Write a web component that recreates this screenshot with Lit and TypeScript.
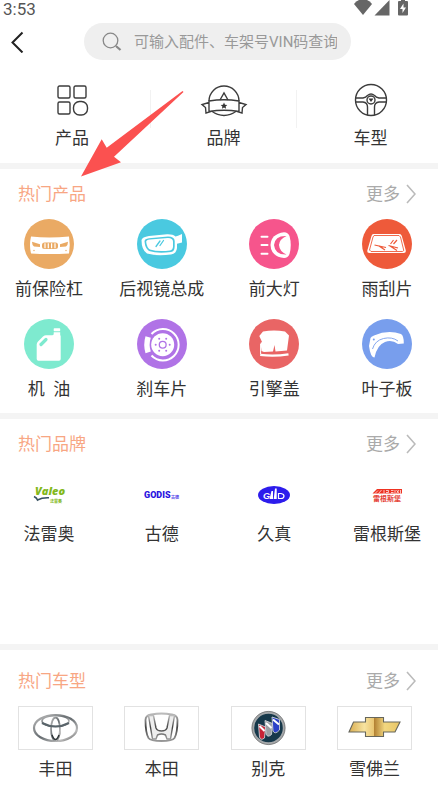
import { LitElement, html, css, svg } from "lit";
import { customElement } from "lit/decorators.js";

const white = "#fff";

const products = [
  {
    name: "前保险杠",
    color: "#eaaa64",
    art: svg`
      <path fill="#fff" d="M7 17.5Q25 19.5 45 17.5Q46.500 26 45 34.500Q25 35.500 7 34.500Q5 26 7 17.500Z"/>
      <rect x="18" y="23.500" width="16" height="6.600" rx="2.500" fill="#eaaa64"/>
      <path stroke="#fff" stroke-width="1.200" d="M21 24.300V29.300M24.300 24.300V29.300M27.600 24.300V29.300M31 24.300V29.300"/>
      <path fill="#eaaa64" d="M8 22.800L16 25.200V28L10 27.600Q8 26 8 22.800ZM44 22.800L36 25.200V28L42 27.600Q44 26 44 22.800Z"/>
      <circle cx="10" cy="31.500" r="0.700" fill="#eaaa64"/><circle cx="42" cy="31.500" r="0.700" fill="#eaaa64"/>`,
  },
  {
    name: "后视镜总成",
    color: "#4ac9e0",
    art: svg`
      <path fill="#fff" d="M4.500 21Q5 18 12 17L30 15.200Q36 15 38.500 17.500L41 16.800L45 15V23.500L40 24.800V29Q39.500 34.500 34 35.500Q20 37.500 10 34.500Q4.500 31 4.500 21Z"/>
      <path fill="#4ac9e0" d="M7.500 22.300Q7.500 20 12 19.300L31 17.500Q37.500 17.500 37.700 22V27.500Q37.500 32.500 34 33Q21 35 12 32Q8 29.500 7.500 22.300Z"/>
      <path fill="#fff" d="M9.200 22.800Q9.200 21 13 20.500L31 19Q35.800 19 36 22.500V27.500Q35.800 31 33 31.500Q21 33 13 30.500Q9.700 28.500 9.200 22.800Z"/>
      <path stroke="#4ac9e0" stroke-width="1.300" stroke-linecap="round" d="M19 27.500L23 22M23 26.500L26.500 21.500"/>`,
  },
  {
    name: "前大灯",
    color: "#f6558c",
    art: svg`
      <path stroke="#fff" stroke-width="2" stroke-linecap="round" d="M12.500 17.700H18.500M12.500 26H18.500M12.500 34.700H18.500"/>
      <path fill="#fff" d="M35 13.200Q22 15 21.500 26Q22 37.500 35 39Q39 39 40.500 35Q43 26 40.500 17Q39 13.200 35 13.200Z"/>
      <path fill="#f6558c" d="M37.500 17Q26 16.500 25 26Q26 36 37.500 35.500Q30.500 32.500 30 26Q30.500 20 37.500 17Z"/>`,
  },
  {
    name: "雨刮片",
    color: "#ee5a3a",
    art: svg`
      <path fill="#fff" d="M11.500 15H37.500Q39.200 15 39.800 17L43.800 31.500Q44 34 41.500 34H7.500Q5 34 5.300 31.500L9.500 17Q10 15 11.500 15Z"/>
      <path fill="none" stroke="#ee5a3a" stroke-width="0.900" d="M12 16.500H37L38.500 18L41.800 31.500L40.500 32.500H9L7.500 31L11 18Z"/>
      <path fill="none" stroke="#ee5a3a" stroke-width="1.200" d="M12.500 26L24 28.500M17 27L23 31M26.500 26.500L36 29M28 27L35 31.500M28.500 25L31.500 21M31.500 25L35 21"/>`,
  },
  {
    name: "机 \u00a0油",
    color: "#7eeacf",
    art: svg`
      <rect x="29.700" y="9.300" width="6.500" height="3" rx="0.700" fill="#fff"/>
      <path fill="#fff" d="M29.700 13.200H36.200V16L36.700 17V40Q36.700 41.700 35 41.700H14.500Q12.700 41.700 12.700 40V25.500Q12.700 24 14 22.500L19 17.500Q20.500 16.300 22 16.300H28.500L29.700 15.500Z"/>
      <path stroke="#7eeacf" stroke-width="3.200" stroke-linecap="round" d="M17 25.500L22 20.500"/>`,
  },
  {
    name: "刹车片",
    color: "#b073e6",
    art: svg`
      <circle cx="25.700" cy="25.700" r="11.500" fill="#fff"/>
      <path fill="none" stroke="#fff" stroke-width="2" d="M14.500 15A15.700 15.700 0 1 1 14.500 36.500"/>
      <path fill="#fff" d="M8.500 17.300L13.800 18.700Q11.500 25.500 13.800 32.500L8.500 34.300Q6 25.500 8.500 17.300Z"/>
      <circle cx="25.700" cy="25.700" r="3.400" fill="none" stroke="#b073e6" stroke-width="1.300"/>
      <g fill="#b073e6"><circle cx="32.700" cy="25.700" r="1"/><circle cx="18.700" cy="25.700" r="1"/><circle cx="22.200" cy="19.700" r="1"/><circle cx="29.200" cy="19.700" r="1"/><circle cx="22.200" cy="31.700" r="1"/><circle cx="29.200" cy="31.700" r="1"/></g>`,
  },
  {
    name: "引擎盖",
    color: "#e96565",
    art: svg`
      <path fill="#fff" d="M14 12.500Q25 10.500 36 12.500L40 16.500L39 24L38 31.500L26.500 32.500L25.500 26L24 32.500L15 33L12.500 32L11.500 24L13 23L10.300 17Z"/>
      <path fill="none" stroke="#fff" stroke-width="2.200" d="M11.200 35.800Q25 37.500 39.500 35.300"/>
      <path stroke="#fff" stroke-width="1" d="M11.600 25V35"/>`,
  },
  {
    name: "叶子板",
    color: "#789eed",
    art: svg`
      <path fill="#fff" d="M8.500 19Q9 17.500 12 16.500Q26 10.500 39 15Q42 17 41.800 24.500L36 25Q30 20.500 23 23Q15 26 12.500 38.500Q8.500 38.500 7 27Z"/>
      <path fill="none" stroke="#789eed" stroke-width="0.900" d="M10.500 30Q13 21.500 21.500 19.500Q30 17.500 36 22"/>
      <circle cx="11.800" cy="20.500" r="1" fill="#789eed"/>`,
  },
];

const brands = [
  {
    name: "法雷奥",
    art: svg`
      <text x="20" y="17" font-family="Open Sans, sans-serif" font-size="11" font-weight="800" font-style="italic" fill="#82b81c">Valeo</text>
      <path fill="none" stroke="#35505f" stroke-width="1.500" d="M19 18.500Q22 20 22.500 22Q27 19.500 34 19.800"/>
      <text x="35" y="25" font-family="Noto Sans CJK SC, sans-serif" font-size="4" font-weight="700" fill="#82b81c">法雷奥</text>`,
  },
  {
    name: "古德",
    art: svg`
      <text x="16" y="20" font-family="Roboto, sans-serif" font-size="9" font-weight="900" fill="#2a12e0">GODIS</text>
      <text x="43" y="21" font-family="Noto Sans CJK SC, sans-serif" font-size="4" font-weight="700" fill="#5544e8">古德</text>`,
  },
  {
    name: "久真",
    art: svg`
      <ellipse cx="34" cy="17" rx="16" ry="9" fill="#2d1cec"/>
      <text x="23" y="21" font-family="Liberation Sans, sans-serif" font-size="9" font-style="italic" font-weight="700" fill="#fff">G</text>
      <path fill="#fff" d="M29.500 21L31.500 13H33V21ZM33.700 21L35 10.500H36.700V21Z"/>
      <path fill="none" stroke="#fff" stroke-width="1.200" d="M38.500 15.500H41Q44 16 44 18Q44 20.500 41 20.500H38.500Z"/>`,
  },
  {
    name: "雷根斯堡",
    art: svg`
      <path fill="#ee3322" d="M19.500 15.500L24 11H49V15.500Z"/>
      <path fill="none" stroke="#fff" stroke-width="0.700" d="M22 15.500L25 12.500M25.500 15.500L28.500 12M31 12V15.500M33 12.500H35.500V14.500H33M38 12.500H40.500M38 14.500H40.500M42 12V15.500M43.500 12L46 15.500M46 12L43.500 15.500M47.500 12V15.500"/>
      <text x="20" y="23" font-family="Noto Sans CJK SC, sans-serif" font-size="7" font-weight="700" fill="#e5463a">雷根斯堡</text>`,
  },
];

const cars = [
  {
    name: "丰田",
    art: svg`
      <defs><linearGradient id="chrome" x1="0" y1="0" x2="1" y2="1"><stop offset="0" stop-color="#bbb"/><stop offset="0.500" stop-color="#666c70"/><stop offset="0.800" stop-color="#bbb"/><stop offset="1" stop-color="#444"/></linearGradient></defs>
      <g fill="none" stroke="url(#chrome)">
        <ellipse cx="37.500" cy="22" rx="21.500" ry="13" stroke-width="2.200"/>
        <ellipse cx="37.500" cy="15" rx="13.500" ry="5.500" stroke-width="1.600"/>
        <ellipse cx="37.500" cy="23" rx="4.500" ry="11.500" stroke-width="1.800"/>
      </g>
      <path fill="none" stroke="#59646a" stroke-width="2.200" d="M24 17Q37.500 24 51 17"/>
      <path fill="none" stroke="#30373a" stroke-width="1.500" d="M34 29Q37.500 38 41 29"/>`,
  },
  {
    name: "本田",
    art: svg`
      <defs><linearGradient id="steel" x1="0" y1="0" x2="0" y2="1"><stop offset="0" stop-color="#bbb"/><stop offset="0.500" stop-color="#444"/><stop offset="1" stop-color="#999"/></linearGradient></defs>
      <path fill="none" stroke="url(#steel)" stroke-width="1.800" d="M27 8.500Q37.500 6.500 48 8.500Q53.500 9.500 53.500 14Q53.500 27 50.500 32Q48.500 35 37.500 35Q26.500 35 24.500 32Q21.500 27 21.500 14Q21.500 9.500 27 8.500Z"/>
      <path fill="#eee" stroke="url(#steel)" stroke-width="1.400" d="M24.500 9.500H29.500L32 22Q33 25 37.500 25Q42 25 43 22L45.500 9.500H50.500L46.500 33H43L41.500 29Q37.500 27 33.500 29L32 33H28.500Z"/>`,
  },
  {
    name: "别克",
    art: svg`
      <circle cx="37.500" cy="22" r="15.500" fill="#16384a" stroke="#a5a8aa" stroke-width="2.400"/>
      <circle cx="37.500" cy="22" r="16.600" fill="none" stroke="#555" stroke-width="0.600"/>
      <g stroke="#d0d4d8" stroke-width="0.900">
        <path fill="#c82336" d="M27.500 18L34.500 21L33.500 32Q29.500 35 28.500 31Z"/>
        <path fill="#9ba0a5" d="M34 14.500L41.500 17.500L40.500 28.500Q36.500 32 35 28Z"/>
        <path fill="#2c42c8" d="M41 11L48.500 13.500L48.500 24Q44 29 42 25Z"/>
      </g>
      <path stroke="#fff" stroke-width="2" d="M28.500 20L33.500 25M35 17L40.500 22M42 13.500L48 18.500"/>`,
  },
  {
    name: "雪佛兰",
    art: svg`
      <defs><linearGradient id="gold" x1="0" y1="0" x2="1" y2="0"><stop offset="0" stop-color="#d9ad50"/><stop offset="0.300" stop-color="#f7e3a0"/><stop offset="0.490" stop-color="#e8c470"/><stop offset="0.500" stop-color="#b48335"/><stop offset="0.700" stop-color="#f2d780"/><stop offset="1" stop-color="#e8c565"/></linearGradient></defs>
      <path fill="url(#gold)" stroke="#66665c" stroke-width="1.100" d="M16.500 16H28.500V11.500H46.500V16H63L58 26H46.500V30.500H28.500V26H12Z"/>`,
  },
];

const shortcuts = [
  {
    name: "产品",
    art: svg`<rect x="9" y="1" width="12" height="12" rx="1.500"/><rect x="25" y="1" width="12" height="12" rx="1.500"/><rect x="9" y="17" width="12" height="12" rx="1.500"/><rect x="24.500" y="16.500" width="14" height="13.500" rx="6"/>`,
  },
  {
    name: "品牌",
    art: svg`
      <path d="M8 16A15 15 0 0 1 38 16M10.500 26Q23 35 35.500 26M19 15L23 8L27 15"/>
      <path d="M8 16Q23 13.500 38 16V26.500Q23 24 8 26.500ZM8 17.500L1 19.500L4.500 22.500L5 28L12 25.800M38 17.500L45 19.500L41.500 22.500L41 28L34 25.800"/>
      <path fill="#333" stroke="none" d="M23 17.500L24 19.700L26.300 19.900L24.600 21.400L25.100 23.700L23 22.500L20.900 23.700L21.400 21.400L19.700 19.900L22 19.700Z"/>`,
  },
  {
    name: "车型",
    art: svg`
      <circle cx="23" cy="15" r="15.500"/><circle cx="23" cy="15" r="4"/>
      <path d="M7.500 13H15Q18 12.500 19.500 10.500Q23 7.500 26.500 10.500Q28 12.500 31 13H38.500M7.500 17H15Q19.500 17.500 19.500 22V30M38.500 17H31Q26.500 17.500 26.500 22V30"/>
      <path fill="#333" stroke="none" d="M20.500 13.500H25.500L23 17Z"/>`,
  },
];

@customElement("app-root")
export class AppRoot extends LitElement {
  static styles = css`
    :host {
      display: block;
      position: relative;
      overflow: hidden;
      background: #fff;
      color: #333;
      font-family: Roboto, "Noto Sans CJK SC", sans-serif;
      font-size: 17px;
      line-height: 28px;
    }
    * { box-sizing: border-box; }
    a { color: inherit; text-decoration: none; }
    svg { display: block; flex: none; }
    .status {
      display: flex;
      justify-content: space-between;
      height: 20px;
      padding: 0 30px 0 3px;
      color: #555;
      line-height: 18px;
    }
    .top { display: flex; align-items: center; padding: 3px 87px 3px 8px; }
    .back { width: 20px; height: 37px; padding: 0; border: 0; background: none; }
    .search {
      display: flex;
      flex: 1;
      align-items: center;
      height: 37px;
      margin-left: 56px;
      padding-left: 18px;
      border-radius: 19px;
      background: #efefef;
    }
    .search input {
      flex: 1;
      min-width: 0;
      margin-left: 12px;
      padding: 0;
      border: 0;
      outline: 0;
      background: none;
      color: #333;
      font: inherit;
      font-size: 15px;
    }
    .search input::placeholder { color: #999; opacity: 1; }
    .shortcuts {
      display: grid;
      grid-template-columns: 144fr 159fr 135fr;
      height: 100px;
      padding-top: 22px;
    }
    .shortcut {
      display: flex;
      flex-direction: column;
      align-items: center;
      gap: 9px;
    }
    .shortcut svg { fill: none; stroke: #3c3c3c; stroke-width: 1.4; overflow: visible; }
    .middle {
      margin: 0 6px;
      background:
        linear-gradient(#f2f2f2, #f2f2f2) left 5px / 1px 38px no-repeat,
        linear-gradient(#f2f2f2, #f2f2f2) right 5px / 1px 38px no-repeat;
    }
    section { border-top: 6px solid #f4f4f4; padding-bottom: 10px; }
    .brands { min-height: 231px; }
    .models { padding-top: 6px; }
    header {
      display: flex;
      align-items: center;
      justify-content: space-between;
      height: 50px;
      padding: 0 22px 0 18px;
    }
    h2 { margin: 0; color: #f8a683; font-size: 17px; font-weight: 400; }
    .more { display: flex; align-items: center; gap: 6px; color: #aaa; }
    .grid {
      display: grid;
      grid-template-columns: repeat(4, 90px);
      justify-content: space-between;
      row-gap: 16px;
      padding: 0 6px 0 4px;
    }
    .item { display: flex; flex-direction: column; align-items: center; white-space: nowrap; }
    .products .item { gap: 6px; }
    .logo { display: grid; place-items: center; height: 51px; }
    .models .grid { grid-template-columns: repeat(4, 75px); padding: 0 26px 0 18px; }
    .models .item { gap: 5px; }
    .plate { width: 75px; height: 44px; outline: 1px solid #e2e2e2; outline-offset: -1px; }
    .arrow { position: absolute; left: 80px; top: 90px; pointer-events: none; }
  `;

  private header(title: string) {
    return html`<header>
      <h2>${title}</h2>
      <a class="more" href="#">更多
        <svg width="10" height="20" fill="none" stroke="#bbb" stroke-width="1.6"><path d="M1 1L9 10L1 19" /></svg>
      </a>
    </header>`;
  }

  render() {
    return html`
      <div class="status">
        <span>3:53</span>
        <svg width="54" height="16" fill="#666">
          <path d="M0 4Q2 1 5 0H13Q16 1 18 4L9 15Z" />
          <path d="M35.5 0V15.500H20.500Z" />
          <path d="M44 2Q44 1 45 1H47V0H51V1H53Q54 1 54 2V14.500Q54 15.500 53 15.500H45Q44 15.500 44 14.500Z" />
          <path fill=${white} d="M49.5 3.500L46 9H48.500V13L52 7.500H49.500Z" />
        </svg>
      </div>
      <div class="top">
        <button class="back" aria-label="返回">
          <svg width="20" height="22" fill="none" stroke="#222" stroke-width="2"><path d="M14.500 1.500L4.500 11.500L14.500 21.500" /></svg>
        </button>
        <label class="search">
          <svg width="20" height="20" fill="none" stroke="#888" stroke-width="1.3">
            <circle cx="8.500" cy="8.500" r="7.300" /><path d="M13.700 13.700L15 15" /><path stroke-width="2.2" d="M14.500 14.500L18.500 18" />
          </svg>
          <input type="search" aria-label="搜索" placeholder="可输入配件、车架号VIN码查询" />
        </label>
      </div>
      <nav class="shortcuts">
        ${shortcuts.map(
          (s, i) => html`<a href="#" class="shortcut ${i === 1 ? "middle" : ""}">
            <svg width="46" height="30">${s.art}</svg><span>${s.name}</span>
          </a>`
        )}
      </nav>
      <section class="products">
        ${this.header("热门产品")}
        <div class="grid">
          ${products.map(
            (p) => html`<a href="#" class="item">
              <svg width="50" height="50" fill="none"><circle cx="25" cy="25" r="25" fill=${p.color} />${p.art}</svg>
              <span>${p.name}</span>
            </a>`
          )}
        </div>
      </section>
      <section class="brands">
        ${this.header("热门品牌")}
        <div class="grid">
          ${brands.map(
            (b) => html`<a href="#" class="item">
              <span class="logo"><svg width="68" height="34">${b.art}</svg></span>
              <span>${b.name}</span>
            </a>`
          )}
        </div>
      </section>
      <section class="models">
        ${this.header("热门车型")}
        <div class="grid">
          ${cars.map(
            (c) => html`<a href="#" class="item">
              <svg class="plate" viewBox="0 0 75 44">${c.art}</svg><span>${c.name}</span>
            </a>`
          )}
        </div>
      </section>
      <svg class="arrow" width="104" height="88" fill="#fb5150">
        <path d="M1 86.500L21.700 49.300L26.700 57.700L102.500 1L103.500 2L34 66.700L41 72.300Z" />
      </svg>
    `;
  }
}
